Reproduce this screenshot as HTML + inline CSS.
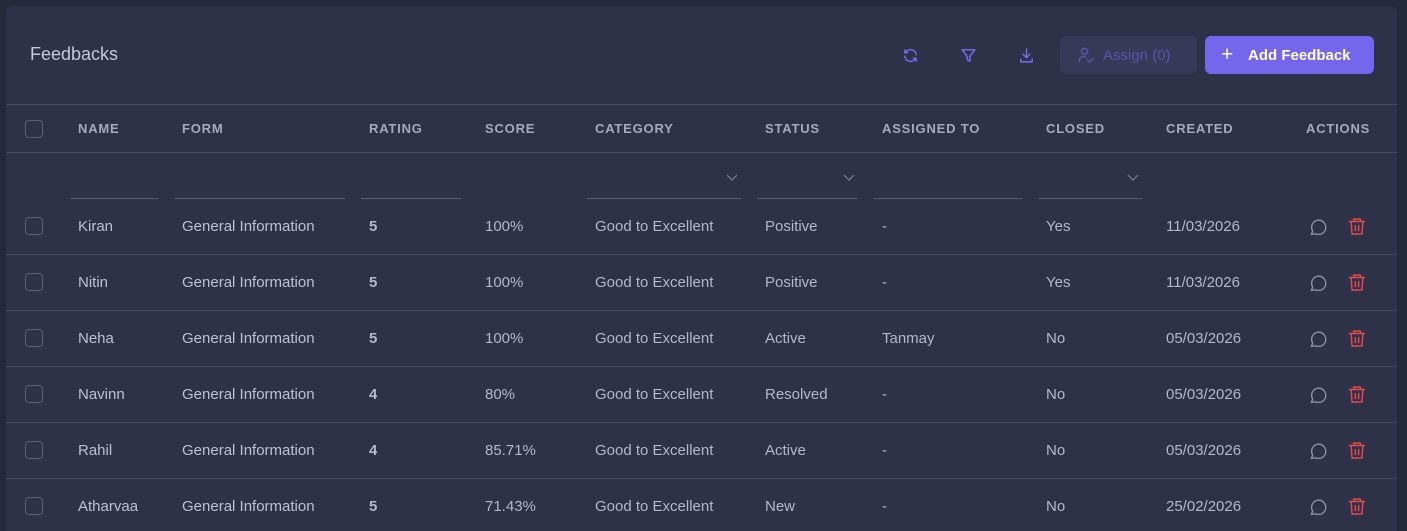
<!DOCTYPE html>
<html><head><style>
*{margin:0;padding:0;box-sizing:border-box}
html,body{width:1407px;height:531px;overflow:hidden}
body{background:#262939;font-family:"Liberation Sans",sans-serif;position:relative}
.card{position:absolute;left:6px;top:6px;width:1391px;height:525px;background:#2e3248;border-radius:6px 6px 0 0}
.t{position:absolute;white-space:nowrap}
.title{left:30px;top:44px;font-size:18px;color:#c4c8da}
.hline{position:absolute;left:6px;width:1391px;height:1px;background:#464a61}
.h{font-size:13px;font-weight:bold;letter-spacing:0.8px;color:#a6aac0;top:121px}
.cb{position:absolute;left:25px;width:18px;height:18px;border:1.5px solid #5c6078;border-radius:4px}
.d{font-size:15px;color:#b4b8cc}
.u{position:absolute;top:198px;height:1px;background:#5a5e76}
.btn{position:absolute;border-radius:6px;font-size:15px;font-weight:bold}
svg{position:absolute}
</style></head><body>
<div class="card"></div>
<div class="t title">Feedbacks</div>

<svg style="left:902px;top:47px" width="17" height="17" viewBox="0 0 24 24" fill="none" stroke="#7b6cf0" stroke-width="2" stroke-linecap="round" stroke-linejoin="round"><path d="M20 11A8 8 0 0 0 5.5 7M4 4v4h4M4 13a8 8 0 0 0 14.5 4M20 20v-4h-4"/></svg>
<svg style="left:960px;top:47px" width="17" height="17" viewBox="0 0 24 24" fill="none" stroke="#7b6cf0" stroke-width="2" stroke-linejoin="round"><path d="M3 4h18l-7 9v7l-4-2v-5z"/></svg>
<svg style="left:1018px;top:47px" width="17" height="17" viewBox="0 0 24 24" fill="none" stroke="#7b6cf0" stroke-width="2" stroke-linecap="round" stroke-linejoin="round"><path d="M12 3v12M7 10l5 5 5-5M4 17v4h16v-4"/></svg>

<div class="btn" style="left:1060px;top:36px;width:137px;height:38px;background:#363a58"></div>
<svg style="left:1077px;top:46px" width="18" height="18" viewBox="0 0 24 24" fill="none" stroke="#5a55a8" stroke-width="2" stroke-linecap="round"><circle cx="10" cy="7" r="4"/><path d="M3 21v-1a6 6 0 0 1 8-5.6M14 19l2.5 2.5L21 17"/></svg>
<div class="t" style="left:1103px;top:47px;font-size:15px;color:#5a55a8">Assign (0)</div>
<div class="btn" style="left:1205px;top:36px;width:169px;height:38px;background:#7566ec"></div>
<div class="t" style="left:1221px;top:43px;font-size:21px;color:#fff">+</div>
<div class="t" style="left:1248px;top:47px;font-size:15px;color:#fff;font-weight:bold">Add Feedback</div>

<div class="hline" style="top:104px"></div>
<div class="hline" style="top:152px"></div>
<div class="cb" style="top:120px"></div>
<div class="t h" style="left:78px">NAME</div>
<div class="t h" style="left:182px">FORM</div>
<div class="t h" style="left:369px">RATING</div>
<div class="t h" style="left:485px">SCORE</div>
<div class="t h" style="left:595px">CATEGORY</div>
<div class="t h" style="left:765px">STATUS</div>
<div class="t h" style="left:882px">ASSIGNED TO</div>
<div class="t h" style="left:1046px">CLOSED</div>
<div class="t h" style="left:1166px">CREATED</div>
<div class="t h" style="left:1306px">ACTIONS</div>

<div class="u" style="left:70px;width:88px"></div>
<div class="u" style="left:174px;width:171px"></div>
<div class="u" style="left:361px;width:100px"></div>
<div class="u" style="left:587px;width:154px"></div>
<div class="u" style="left:757px;width:101px"></div>
<div class="u" style="left:874px;width:148px"></div>
<div class="u" style="left:1038px;width:104px"></div>
<svg style="left:726px;top:174px" width="12" height="8" viewBox="0 0 12 8" fill="none" stroke="#7d8198" stroke-width="1.2"><path d="M1 1l5 5 5-5"/></svg>
<svg style="left:843px;top:174px" width="12" height="8" viewBox="0 0 12 8" fill="none" stroke="#7d8198" stroke-width="1.2"><path d="M1 1l5 5 5-5"/></svg>
<svg style="left:1127px;top:174px" width="12" height="8" viewBox="0 0 12 8" fill="none" stroke="#7d8198" stroke-width="1.2"><path d="M1 1l5 5 5-5"/></svg>

<div id="rows"></div>
<script>
const R=[["Kiran","5","100%","Positive","-","Yes","11/03/2026"],["Nitin","5","100%","Positive","-","Yes","11/03/2026"],["Neha","5","100%","Active","Tanmay","No","05/03/2026"],["Navinn","4","80%","Resolved","-","No","05/03/2026"],["Rahil","4","85.71%","Active","-","No","05/03/2026"],["Atharvaa","5","71.43%","New","-","No","25/02/2026"]];
let h="";
R.forEach((r,i)=>{const c=226+i*56,ty=c-8;
h+=`<div class="cb" style="top:${c-9}px"></div>
<div class="t d" style="left:78px;top:${ty}px;color:#bdc1d4">${r[0]}</div>
<div class="t d" style="left:182px;top:${ty}px;color:#bdc1d4">General Information</div>
<div class="t d" style="left:369px;top:${ty}px;font-weight:bold">${r[1]}</div>
<div class="t d" style="left:485px;top:${ty}px">${r[2]}</div>
<div class="t d" style="left:595px;top:${ty}px">Good to Excellent</div>
<div class="t d" style="left:765px;top:${ty}px">${r[3]}</div>
<div class="t d" style="left:882px;top:${ty}px">${r[4]}</div>
<div class="t d" style="left:1046px;top:${ty}px">${r[5]}</div>
<div class="t d" style="left:1166px;top:${ty}px">${r[6]}</div>
<svg style="left:1308px;top:${c-9}px" width="21" height="20" viewBox="0 0 24 24" fill="none" stroke="#9094aa" stroke-width="1.6" stroke-linejoin="round"><path d="M3.5 21l1.5-4.2A8.5 8.5 0 1 1 8.5 20z"/></svg>
<svg style="left:1347px;top:${c-10}px" width="20" height="21" viewBox="0 0 24 24" fill="none" stroke="#e5484d" stroke-width="1.8" stroke-linecap="round" stroke-linejoin="round"><path d="M3 6h18M8 6V3h8v3M5 6l1 15h12l1-15M10 11v6M14 11v6"/></svg>`;
if(i<5)h+=`<div class="hline" style="top:${c+28}px"></div>`;});
document.getElementById("rows").innerHTML=h;
</script>
</body></html>
